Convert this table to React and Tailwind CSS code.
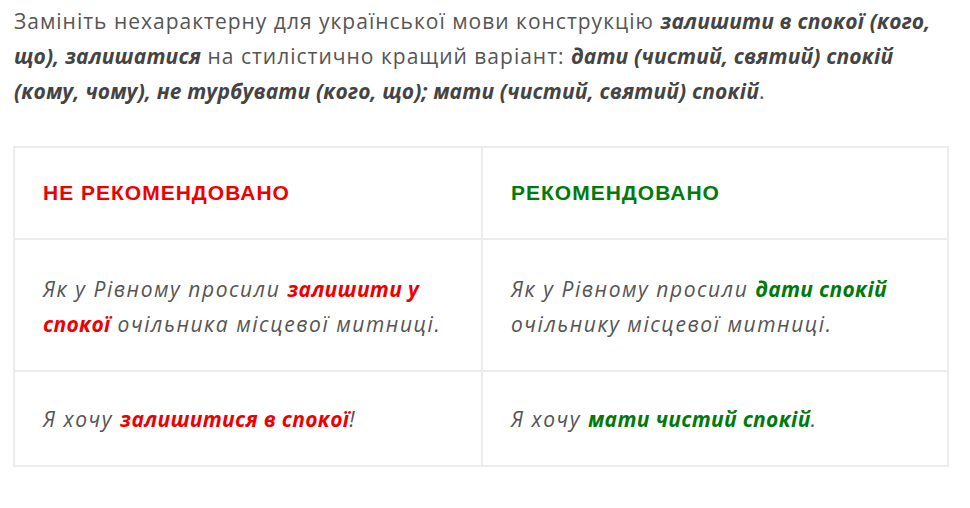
import React from 'react';

const Red = ({ children }) => (
  <strong className="font-bold tracking-[0.3px] text-[#ee0000]">{children}</strong>
);

const Green = ({ children }) => (
  <strong className="font-bold tracking-[0.3px] text-[#007a0a]">{children}</strong>
);

const border = 'border-2 border-[#ececec] px-[28px]';
const cell = `${border} align-top pt-[30px] pb-[26px]`;
const tallCell = `${border} align-top pt-[32px] pb-[26px]`;
const headCell = `${border} align-middle`;
const head = "font-['Liberation_Sans',Arial,sans-serif] font-bold text-[21px] tracking-[1px]";
const body = 'italic text-[21px] leading-[35px] tracking-[1.55px]';

export default function App() {
  return (
    <div className="bg-white min-h-[508px] pl-[14px] pt-[4px] font-['Open_Sans',sans-serif] text-[#555]">
      {/* Intro paragraph */}
      <p className="w-[936px] text-[21px] leading-[35px] tracking-[1px]">
        Замініть нехарактерну для української мови конструкцію{' '}
        <em className="font-bold tracking-[0.15px] text-[#444]">залишити в спокої (кого, що), залишатися</em> на
        стилістично кращий варіант:{' '}
        <em className="font-bold tracking-[0.15px] text-[#444]">дати (чистий, святий) спокій (кому, чому), не турбувати (кого, що); мати (чистий, святий) спокій</em>.
      </p>

      {/* Comparison table */}
      <table className="mt-[37px] -ml-[1px] w-[934px] border-collapse table-fixed">
        <colgroup>
          <col className="w-[468px]" />
          <col className="w-[466px]" />
        </colgroup>
        <tbody>
          <tr className="h-[92px]">
            <td className={headCell}>
              <span className={`${head} text-[#ee0000]`}>НЕ РЕКОМЕНДОВАНО</span>
            </td>
            <td className={headCell}>
              <span className={`${head} text-[#007a0a]`}>РЕКОМЕНДОВАНО</span>
            </td>
          </tr>
          <tr className="h-[132px]">
            <td className={tallCell}>
              <p className={body}>
                Як у Рівному просили <Red>залишити у спокої</Red> очільника місцевої митниці.
              </p>
            </td>
            <td className={tallCell}>
              <p className={body}>
                Як у Рівному просили <Green>дати спокій</Green> очільнику місцевої митниці.
              </p>
            </td>
          </tr>
          <tr className="h-[95px]">
            <td className={cell}>
              <p className={body}>
                Я хочу <Red>залишитися в спокої</Red>!
              </p>
            </td>
            <td className={cell}>
              <p className={body}>
                Я хочу <Green>мати чистий спокій</Green>.
              </p>
            </td>
          </tr>
        </tbody>
      </table>
    </div>
  );
}
